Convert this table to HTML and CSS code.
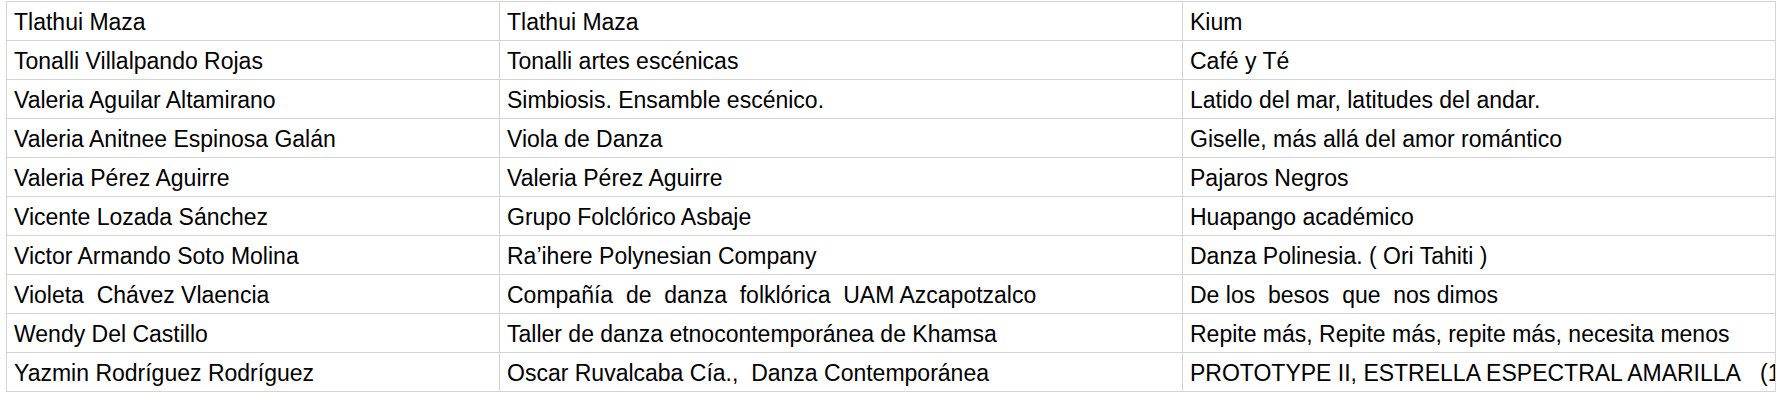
FILE: index.html
```html
<!DOCTYPE html>
<html lang="es">
<head>
<meta charset="utf-8">
<title>Hoja</title>
<link rel="stylesheet" href="styles.css">
</head>
<body>
<div class="sheet">
<table class="grid">
<colgroup><col class="c1"><col class="c2"><col class="c3"></colgroup>
<tbody>
<tr><td>Tlathui Maza</td><td>Tlathui Maza</td><td>Kium</td></tr>
<tr><td>Tonalli Villalpando Rojas</td><td>Tonalli artes escénicas</td><td>Café y Té</td></tr>
<tr><td>Valeria Aguilar Altamirano</td><td>Simbiosis. Ensamble escénico.</td><td>Latido del mar, latitudes del andar.</td></tr>
<tr><td>Valeria Anitnee Espinosa Galán</td><td>Viola de Danza</td><td>Giselle, más allá del amor romántico</td></tr>
<tr><td>Valeria Pérez Aguirre</td><td>Valeria Pérez Aguirre</td><td>Pajaros Negros</td></tr>
<tr><td>Vicente Lozada Sánchez</td><td>Grupo Folclórico Asbaje</td><td>Huapango académico</td></tr>
<tr><td>Victor Armando Soto Molina</td><td>Ra’ihere Polynesian Company</td><td>Danza Polinesia. ( Ori Tahiti )</td></tr>
<tr><td>Violeta&nbsp; Chávez Vlaencia</td><td>Compañía&nbsp; de&nbsp; danza&nbsp; folklórica&nbsp; UAM Azcapotzalco</td><td>De los&nbsp; besos&nbsp; que&nbsp; nos dimos</td></tr>
<tr><td>Wendy Del Castillo</td><td>Taller de danza etnocontemporánea de Khamsa</td><td>Repite más, Repite más, repite más, necesita menos</td></tr>
<tr><td>Yazmin Rodríguez Rodríguez</td><td>Oscar Ruvalcaba Cía.,&nbsp; Danza Contemporánea</td><td>PROTOTYPE II, ESTRELLA ESPECTRAL AMARILLA&nbsp;&nbsp; (1</td></tr>
</tbody>
</table>
</div>
</body>
</html>
```
FILE: styles.css
```css
html, body {
  margin: 0;
  padding: 0;
  background: #ffffff;
}
.sheet {
  padding: 1px 0 0 6px;
}
.grid {
  border-collapse: collapse;
  table-layout: fixed;
  width: 1769px;
  font-family: "Liberation Sans", Arial, Helvetica, sans-serif;
  font-size: 23px;
  color: #000000;
}
.c1 { width: 493px; }
.c2 { width: 683px; }
.c3 { width: 593px; }
.grid tr {
  height: 39px;
}
.grid td {
  border: 1px solid #d3d3d3;
  padding: 2px 6px 0 7px;
  line-height: 26px;
  vertical-align: middle;
  white-space: nowrap;
  overflow: hidden;
}
.grid td:last-child {
  padding-right: 0;
}
```
